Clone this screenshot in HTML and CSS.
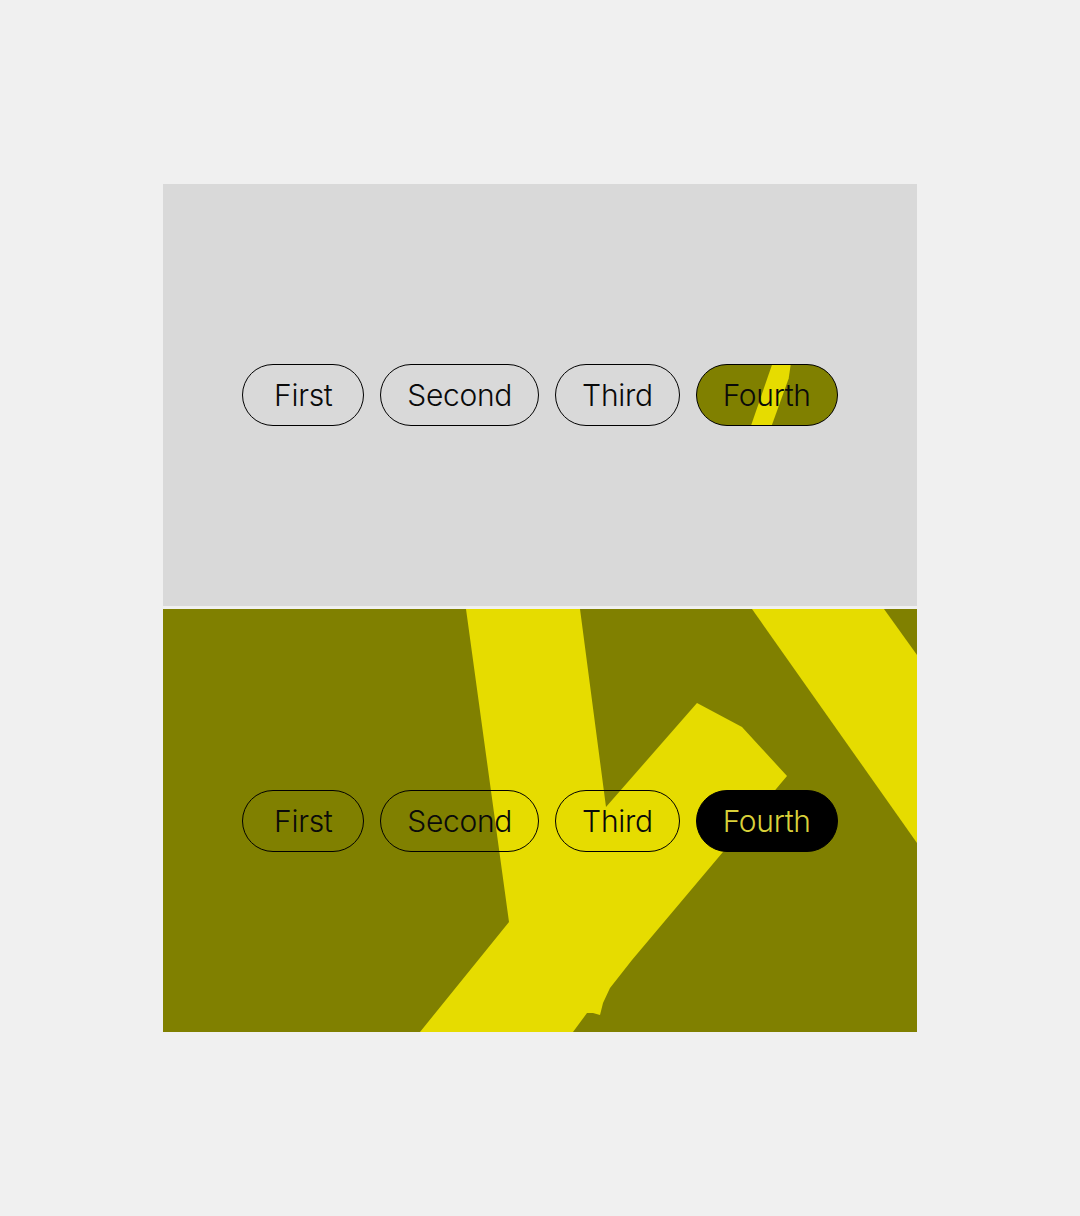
FILE: index.html
```html
<!DOCTYPE html>
<html lang="en">
<head>
<meta charset="utf-8">
<title>Segmented pills</title>
<link rel="stylesheet" href="styles.css">
</head>
<body>
<main class="stage">
  <section class="panel panel-light">
    <div class="pills">
      <button class="pill">First</button>
      <button class="pill">Second</button>
      <button class="pill">Third</button>
      <button class="pill pill-olive">
        <svg class="pill-stripe" viewBox="0 0 142 62" preserveAspectRatio="none" aria-hidden="true">
          <polygon points="76,0 95,0 93,14 76,62 55,62" fill="#e6dc00"/>
        </svg>
        <span class="pill-label">Fourth</span>
      </button>
    </div>
  </section>
  <section class="panel panel-pattern">
    <svg class="pattern" viewBox="0 0 754 423" preserveAspectRatio="none" aria-hidden="true">
      <polygon fill="#e6dc00" points="303,0 417,0 443,198 534,94 579,118 624,167 469,351 447,379 440,394 437,406 430,404 424,404 410,423 257,423 346,313"/>
      <polygon fill="#e6dc00" points="589,0 721,0 754,46 754,234"/>
    </svg>
    <div class="pills">
      <button class="pill">First</button>
      <button class="pill">Second</button>
      <button class="pill">Third</button>
      <button class="pill pill-dark">Fourth</button>
    </div>
  </section>
</main>
</body>
</html>
```

FILE: styles.css
```css
html, body {
  margin: 0;
  padding: 0;
  background: #f0f0f0;
}

body {
  font-family: Inter, "Noto Sans", "Liberation Sans", sans-serif;
}

.stage {
  width: 754px;
  margin: 0 auto;
  padding-top: 184px;
  display: flex;
  flex-direction: column;
  gap: 3px;
}

.panel {
  position: relative;
  overflow: hidden;
  display: flex;
  align-items: center;
  justify-content: center;
}

.panel-light {
  height: 422px;
  background: #d9d9d9;
}

.panel-pattern {
  height: 423px;
  background: #808000;
}

.pattern {
  position: absolute;
  inset: 0;
  width: 100%;
  height: 100%;
  display: block;
}

.pills {
  position: relative;
  display: flex;
  gap: 16px;
  align-items: center;
}

.pill {
  position: relative;
  overflow: hidden;
  box-sizing: border-box;
  height: 62px;
  min-width: 122px;
  padding: 0 26px;
  border: 1px solid #000;
  border-radius: 31px;
  background: transparent;
  color: #0a0a0a;
  font-family: Inter, "Noto Sans", "Liberation Sans", sans-serif;
  font-size: 30px;
  font-weight: 350;
  letter-spacing: -0.3px;
  line-height: 1;
  display: inline-flex;
  align-items: center;
  justify-content: center;
  cursor: pointer;
}

.pill-olive {
  background: #808000;
}

.pill-stripe {
  position: absolute;
  left: 0;
  top: 0;
  width: 100%;
  height: 100%;
  display: block;
}

.pill-label {
  position: relative;
}

.pill-dark {
  background: #000;
  border-color: #000;
  color: #d9d13a;
}
```
